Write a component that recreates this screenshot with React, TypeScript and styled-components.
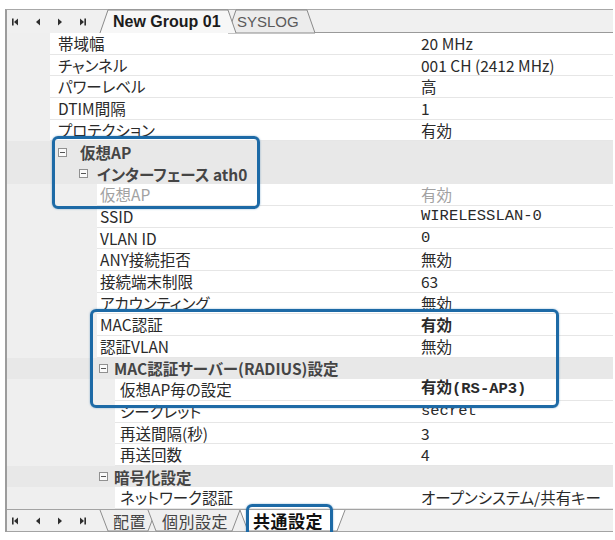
import React from 'react';
import styled, { createGlobalStyle } from 'styled-components';

const RH = 21.65;
const LABEL_END = 408;

const GlobalStyle = createGlobalStyle`
  *, *::before, *::after { box-sizing: border-box; }
  html, body { margin: 0; padding: 0; background: #fff; }
  body { font-family: "Noto Sans CJK JP", "Noto Sans", sans-serif; }
`;

const Frame = styled.div`
  margin: 9px 0 0 5px;
  width: 608px;
  border-left: 2px solid #9c9c9c;
  border-top: 1px solid #a8a8a8;
  background: #efefef;
`;

const Strip = styled.div<{ $bottom?: boolean }>`
  display: flex;
  align-items: stretch;
  height: 23px;
  background: #f0f0f0;
  border-top: ${p => (p.$bottom ? '1px solid #a3a3a3' : 'none')};
  border-bottom: ${p => (p.$bottom ? '1px solid #a3a3a3' : 'none')};
`;

const Nav = styled.div`
  display: flex;
  align-items: center;
  gap: 6.5px;
  width: 93px;
  flex: none;
`;

const NavButton = styled.span`
  width: 16px;
  height: 10px;
  display: flex;
  justify-content: center;
  align-items: center;
`;

const TabBox = styled.div<{ $active?: boolean; $w: number; $pad: number; $overlap?: number }>`
  position: relative;
  flex: none;
  width: ${p => p.$w}px;
  margin-left: ${p => -(p.$overlap ?? 0)}px;
  padding-left: ${p => p.$pad}px;
  display: flex;
  align-items: center;
  z-index: ${p => (p.$active ? 2 : 1)};
`;

const TabShape = styled.svg`
  position: absolute;
  inset: 0;
  width: 100%;
  height: 100%;
  overflow: visible;
`;

const TopTabText = styled.span<{ $active?: boolean }>`
  position: relative;
  font-family: "Liberation Sans", Arial, sans-serif;
  font-size: ${p => (p.$active ? 16 : 15)}px;
  font-weight: ${p => (p.$active ? 700 : 400)};
  color: ${p => (p.$active ? '#1c1c1c' : '#5a5a5a')};
  white-space: nowrap;
  line-height: 1;
`;

const BottomTabText = styled.span<{ $active?: boolean }>`
  position: relative;
  font-size: ${p => (p.$active ? 17 : 16)}px;
  font-weight: ${p => (p.$active ? 700 : 400)};
  color: ${p => (p.$active ? '#111' : '#444')};
  letter-spacing: 0.5px;
  white-space: nowrap;
  line-height: 1;
`;

const Callout = styled.span`
  position: absolute;
  left: 6px;
  top: -6px;
  width: 87px;
  height: 34px;
  border: 3px solid #1d6aa6;
  border-radius: 6px;
  box-shadow: 0 0 2px rgba(29, 106, 166, 0.55);
  z-index: 3;
`;

const StripFill = styled.div<{ $line?: 'bottom' }>`
  flex: 1;
  border-bottom: ${p => (p.$line === 'bottom' ? '1px solid #9a9a9a' : 'none')};
`;

const Grid = styled.div`
  background: #efefef;
`;

const PropRow = styled.div<{ $indent: number }>`
  display: grid;
  grid-template-columns: ${p => p.$indent}px ${p => LABEL_END - p.$indent}px 1fr;
  height: ${RH}px;
`;

const Gutter = styled.div`
  background: #efefef;
`;

const LabelCell = styled.div<{ $pad: number; $disabled?: boolean }>`
  background: #fff;
  border-bottom: 1px solid #e6e6e6;
  padding-left: ${p => p.$pad}px;
  font-size: 15.5px;
  line-height: ${RH - 1}px;
  color: ${p => (p.$disabled ? '#a2a2a2' : '#2a2a2a')};
  white-space: nowrap;
  overflow: hidden;
  font-feature-settings: "palt";
`;

const ValueCell = styled.div<{ $mono?: boolean; $bold?: boolean; $disabled?: boolean }>`
  background: #fff;
  border-bottom: 1px solid #e6e6e6;
  padding-left: 6px;
  font-family: ${p => (p.$mono ? '"Liberation Mono", "Noto Sans CJK JP", monospace' : '"Noto Sans CJK JP", sans-serif')};
  font-size: 15.5px;
  font-weight: ${p => (p.$bold ? 700 : 400)};
  line-height: ${RH - 1}px;
  color: ${p => (p.$disabled ? '#a2a2a2' : '#2a2a2a')};
  white-space: nowrap;
  overflow: hidden;
  font-feature-settings: "palt";
`;

const GroupRow = styled.div<{ $icon: number }>`
  display: flex;
  align-items: center;
  height: ${RH}px;
  background: #e8e8e8;
  padding-left: ${p => p.$icon}px;
`;

const Expander = styled.span`
  position: relative;
  flex: none;
  width: 9px;
  height: 9px;
  border: 1px solid #909090;
  background: #fafafa;
  &::after {
    content: '';
    position: absolute;
    left: 1px;
    right: 1px;
    top: 3px;
    height: 1px;
    background: #555;
  }
`;

const GroupLabel = styled.span<{ $gap: number }>`
  margin-left: ${p => p.$gap}px;
  font-size: 15.5px;
  font-weight: 700;
  color: #454545;
  white-space: nowrap;
  font-feature-settings: "palt";
`;

const Highlight = styled.div<{ $left: number; $width: number; $top: number; $bottom: number }>`
  position: relative;
  &::after {
    content: '';
    position: absolute;
    left: ${p => p.$left}px;
    width: ${p => p.$width}px;
    top: ${p => p.$top}px;
    bottom: ${p => p.$bottom}px;
    border: 3px solid #1d6aa6;
    border-radius: 6px;
    box-shadow: 0 0 2px rgba(29, 106, 166, 0.55);
    pointer-events: none;
    z-index: 3;
  }
`;

type Prop = {
  kind: 'prop';
  level: 0 | 1 | 3;
  label: string;
  value: string;
  mono?: boolean;
  bold?: boolean;
  disabled?: boolean;
};
type Group = { kind: 'group'; level: 0 | 1 | 2; label: string };
type RowData = Prop | Group;

const PROP_INDENT: Record<number, number> = { 0: 43, 1: 90, 3: 108 };
const PROP_PAD: Record<number, number> = { 0: 8, 1: 3, 3: 5 };
const GROUP_ICON: Record<number, number> = { 0: 51, 1: 72, 2: 92 };
const GROUP_TEXT: Record<number, number> = { 0: 73, 1: 90, 2: 107 };

const sec1: RowData[] = [
  { kind: 'prop', level: 0, label: '帯域幅', value: '20 MHz' },
  { kind: 'prop', level: 0, label: 'チャンネル', value: '001 CH (2412 MHz)' },
  { kind: 'prop', level: 0, label: 'パワーレベル', value: '高' },
  { kind: 'prop', level: 0, label: 'DTIM間隔', value: '1' },
  { kind: 'prop', level: 0, label: 'プロテクション', value: '有効' },
];
const box1: RowData[] = [
  { kind: 'group', level: 0, label: '仮想AP' },
  { kind: 'group', level: 1, label: 'インターフェース ath0' },
  { kind: 'prop', level: 1, label: '仮想AP', value: '有効', disabled: true },
];
const sec2: RowData[] = [
  { kind: 'prop', level: 1, label: 'SSID', value: 'WIRELESSLAN-0', mono: true },
  { kind: 'prop', level: 1, label: 'VLAN ID', value: '0', mono: true },
  { kind: 'prop', level: 1, label: 'ANY接続拒否', value: '無効' },
  { kind: 'prop', level: 1, label: '接続端末制限', value: '63' },
  { kind: 'prop', level: 1, label: 'アカウンティング', value: '無効' },
];
const box2: RowData[] = [
  { kind: 'prop', level: 1, label: 'MAC認証', value: '有効', bold: true },
  { kind: 'prop', level: 1, label: '認証VLAN', value: '無効' },
  { kind: 'group', level: 2, label: 'MAC認証サーバー(RADIUS)設定' },
  { kind: 'prop', level: 3, label: '仮想AP毎の設定', value: '有効(RS-AP3)', bold: true, mono: true },
];
const sec3: RowData[] = [
  { kind: 'prop', level: 3, label: 'シークレット', value: 'secret', mono: true },
  { kind: 'prop', level: 3, label: '再送間隔(秒)', value: '3' },
  { kind: 'prop', level: 3, label: '再送回数', value: '4' },
  { kind: 'group', level: 2, label: '暗号化設定' },
  { kind: 'prop', level: 3, label: 'ネットワーク認証', value: 'オープンシステム/共有キー' },
];

const Row = ({ r }: { r: RowData }) => {
  if (r.kind === 'group') {
    return (
      <GroupRow $icon={GROUP_ICON[r.level]}>
        <Expander />
        <GroupLabel $gap={GROUP_TEXT[r.level] - GROUP_ICON[r.level] - 9}>{r.label}</GroupLabel>
      </GroupRow>
    );
  }
  return (
    <PropRow $indent={PROP_INDENT[r.level]}>
      <Gutter />
      <LabelCell $pad={PROP_PAD[r.level]} $disabled={r.disabled}>
        {r.label}
      </LabelCell>
      <ValueCell $mono={r.mono} $bold={r.bold} $disabled={r.disabled}>
        {r.value}
      </ValueCell>
    </PropRow>
  );
};

const NavIcon = ({ kind }: { kind: 'first' | 'prev' | 'next' | 'last' }) => {
  const c = '#2e2e2e';
  return (
    <svg width="10" height="10" viewBox="0 0 10 10">
      {kind === 'first' && (
        <>
          <rect x="2" y="1.5" width="1.6" height="7" fill={c} />
          <path d="M8 1.5 L4 5 L8 8.5 Z" fill={c} />
        </>
      )}
      {kind === 'prev' && <path d="M7 1.5 L3 5 L7 8.5 Z" fill={c} />}
      {kind === 'next' && <path d="M3 1.5 L7 5 L3 8.5 Z" fill={c} />}
      {kind === 'last' && (
        <>
          <path d="M2 1.5 L6 5 L2 8.5 Z" fill={c} />
          <rect x="6.4" y="1.5" width="1.6" height="7" fill={c} />
        </>
      )}
    </svg>
  );
};

const NavButtons = () => (
  <Nav>
    {(['first', 'prev', 'next', 'last'] as const).map(k => (
      <NavButton key={k}>
        <NavIcon kind={k} />
      </NavButton>
    ))}
  </Nav>
);

type TabProps = {
  w: number;
  pad: number;
  overlap?: number;
  active?: boolean;
  children: React.ReactNode;
};

const TopTab = ({ w, pad, overlap, active, children }: TabProps) => (
  <TabBox $w={w} $pad={pad} $overlap={overlap} $active={active}>
    <TabShape viewBox={`0 0 ${w} 23`} preserveAspectRatio="none">
      <path
        d={`M0 23 L8 0 L${w - 8} 0 L${w} 23 ${active ? '' : 'Z'}`}
        fill={active ? '#f7f7f7' : '#ececec'}
        stroke="#8a8a8a"
        strokeWidth="1"
      />
    </TabShape>
    <TopTabText $active={active}>{children}</TopTabText>
  </TabBox>
);

const BottomTab = ({ w, pad, overlap, active, children }: TabProps) => (
  <TabBox $w={w} $pad={pad} $overlap={overlap} $active={active}>
    <TabShape viewBox={`0 0 ${w} 22`} preserveAspectRatio="none">
      <path
        d={`M0 0 L8 22 L${w - 8} 22 L${w} 0`}
        fill={active ? '#ffffff' : '#efefef'}
        stroke="#8a8a8a"
        strokeWidth="1"
      />
    </TabShape>
    <BottomTabText $active={active}>{children}</BottomTabText>
    {active && <Callout />}
  </TabBox>
);

export default function App() {
  return (
    <>
      <GlobalStyle />
      <Frame>
        <Strip>
          <NavButtons />
          <TopTab w={136} pad={13} active>
            New Group 01
          </TopTab>
          <TopTab w={87} pad={9} overlap={8}>
            SYSLOG
          </TopTab>
          <StripFill $line="bottom" />
        </Strip>
        <Grid>
          {sec1.map((r, i) => (
            <Row key={`a${i}`} r={r} />
          ))}
          <Highlight $left={45} $width={208} $top={-5} $bottom={-3}>
            {box1.map((r, i) => (
              <Row key={`b${i}`} r={r} />
            ))}
          </Highlight>
          {sec2.map((r, i) => (
            <Row key={`c${i}`} r={r} />
          ))}
          <Highlight $left={83} $width={469} $top={-5.5} $bottom={-7}>
            {box2.map((r, i) => (
              <Row key={`d${i}`} r={r} />
            ))}
          </Highlight>
          {sec3.map((r, i) => (
            <Row key={`e${i}`} r={r} />
          ))}
        </Grid>
        <Strip $bottom>
          <NavButtons />
          <BottomTab w={56} pad={13}>
            配置
          </BottomTab>
          <BottomTab w={92} pad={14} overlap={8}>
            個別設定
          </BottomTab>
          <BottomTab w={105} pad={13} overlap={0} active>
            共通設定
          </BottomTab>
          <StripFill />
        </Strip>
      </Frame>
    </>
  );
}
